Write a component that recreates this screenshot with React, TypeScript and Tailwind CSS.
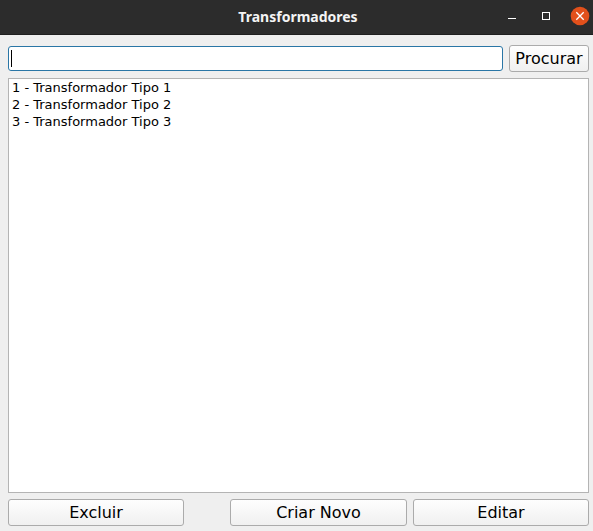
import React from "react";

const items = ["1 - Transformador Tipo 1", "2 - Transformador Tipo 2", "3 - Transformador Tipo 3"];

function Button({ className, children }: { className: string; children: React.ReactNode }) {
  return (
    <button
      className={`flex h-[27px] shrink-0 items-center justify-center rounded-[3px] border border-[#ababab] bg-linear-to-b from-[#fefefe] to-[#f0f0f0] text-[16px] leading-[19px] whitespace-nowrap text-black ${className}`}
    >
      {children}
    </button>
  );
}

export default function App() {
  return (
    <div className="flex h-[531px] w-[593px] flex-col overflow-hidden bg-[#efefef] font-['DejaVu_Sans',sans-serif] text-black">
      <header className="flex h-[35px] shrink-0 items-center border-b border-[#1f1f1f] bg-[#2c2c2c]">
        <div className="w-[105px]" />
        <h1 className="flex-1 text-center font-['Noto_Sans',sans-serif] text-[14px] leading-5 font-bold text-[#f4f4f4]">Transformadores</h1>
        <svg width="102" height="34" viewBox="491 0 102 34" fill="none">
          <path d="M508 18.5h8" stroke="#fff" />
          <rect x="542.5" y="12.5" width="7" height="7" stroke="#fff" />
          <circle cx="580" cy="16" r="9.3" fill="#e2501b" />
          <path d="M576.3 12.3l7.4 7.4m0-7.4l-7.4 7.4" stroke="#fff" strokeWidth="1.3" />
        </svg>
      </header>
      <main className="flex flex-1 flex-col pt-[10px] pr-1 pb-[5px] pl-2">
        <div className="flex h-[27px] items-center gap-1.5">
          <div className="flex h-[25px] flex-1 items-center rounded-[3px] border border-[#2a76a6] bg-white pl-0.5">
            <span className="h-[17px] w-px bg-black" />
          </div>
          <Button className="w-[80px]">Procurar</Button>
        </div>
        <ul className="mt-1.5 h-[415px] border border-[#b4b4b4] bg-white pl-[3px] text-[13px] leading-[17px]">
          {items.map((item) => (
            <li key={item}>{item}</li>
          ))}
        </ul>
        <div className="mt-1.5 flex gap-1.5">
          <Button className="mr-10 w-[176px]">Excluir</Button>
          <Button className="w-[177px]">Criar Novo</Button>
          <Button className="w-[176px]">Editar</Button>
        </div>
      </main>
    </div>
  );
}
